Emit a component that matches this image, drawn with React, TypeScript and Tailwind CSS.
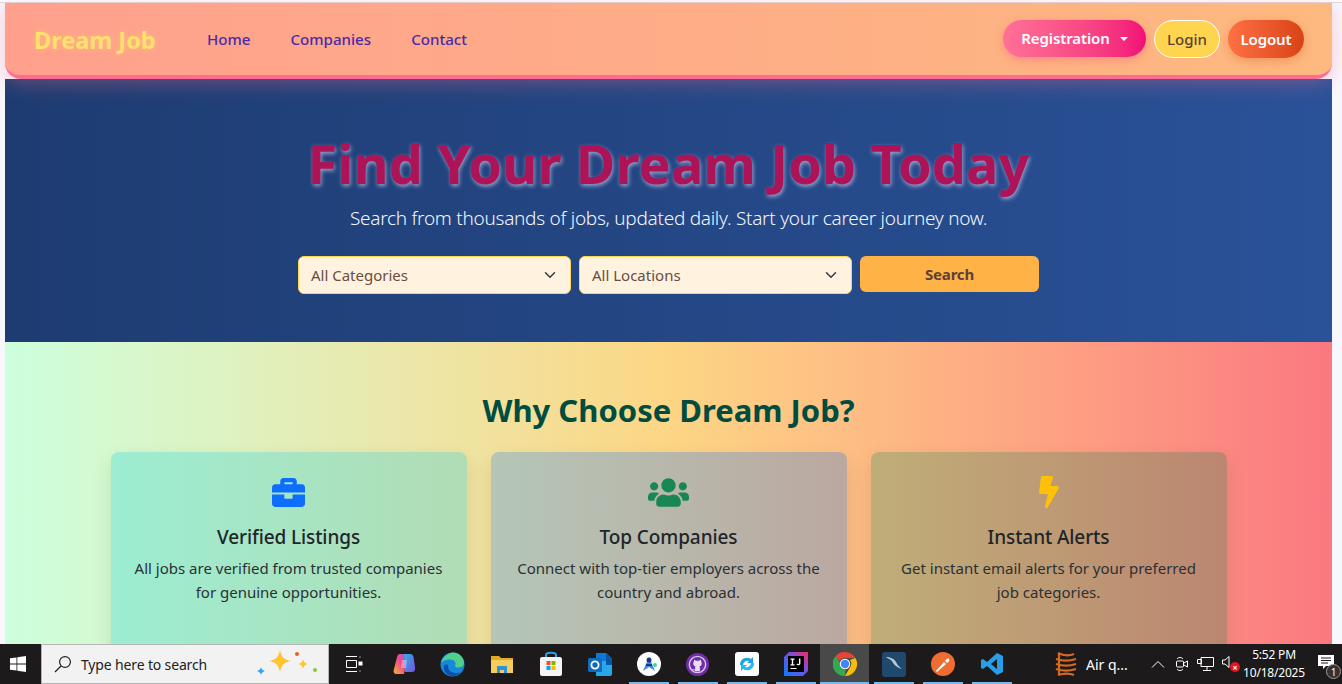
import React from 'react';
import { FaBriefcase, FaUsers, FaBolt } from 'react-icons/fa';

const ui = "font-['Noto_Sans',sans-serif]";

function ChevronDown() {
    return (
        <svg width="12" height="12" viewBox="0 0 16 16" fill="none" stroke="#343a40" strokeWidth="2" strokeLinecap="round" strokeLinejoin="round">
            <path d="M2 5l6 6 6-6" />
        </svg>
    );
}

function FakeSelect({ label }: { label: string }) {
    return (
        <div className="flex h-[38px] w-[273px] items-center justify-between rounded-md border border-[#ffd54f] bg-[#fff3e0] pl-3 pr-[14px] text-[15px] text-[#6a4c41]">
            <span>{label}</span>
            <ChevronDown />
        </div>
    );
}

function Navbar() {
    return (
        <nav className="relative z-10 ml-[5px] flex h-[76px] w-[1327px] shrink-0 items-center justify-between rounded-b-2xl border-b-4 border-[#ff6b93] bg-gradient-to-r from-[#ffa08e] to-[#fdb97f] pl-[29px] pr-[28px] shadow-[0_4px_20px_rgba(255,105,135,0.35)]">
            <div className="flex items-center">
                <span className="w-[173px] pt-[3px] text-[23.500px] font-bold text-[#ffe070] [text-shadow:0_0_6px_rgba(255,210,100,0.6)]">Dream Job</span>
                <div className="flex gap-10 text-[15.100px] font-medium text-[#4b2aa8]">
                    <a>Home</a>
                    <a>Companies</a>
                    <a>Contact</a>
                </div>
            </div>
            <div className="flex items-center gap-2">
                <button className="mb-[1px] flex h-[37px] w-[143px] items-center justify-center gap-2 rounded-full bg-gradient-to-r from-[#ff7096] to-[#f20b78] text-[15px] font-semibold tracking-[-0.1px] text-white shadow-[0_3px_10px_rgba(255,90,130,0.45)]">
                    Registration
                    <span className="ml-0.5 h-0 w-0 border-x-[4px] border-t-[4px] border-x-transparent border-t-white" />
                </button>
                <button className="h-[38px] w-[66px] rounded-full border border-white bg-[#ffd54f] text-[15px] font-medium text-[#5d4037]">Login</button>
                <button className="h-[38px] w-[76px] rounded-full bg-gradient-to-r from-[#ff7043] to-[#d84315] text-[15px] font-semibold tracking-[-0.1px] text-white shadow-[0_3px_10px_rgba(216,67,21,0.3)]">Logout</button>
            </div>
        </nav>
    );
}

function Hero() {
    return (
        <section className="ml-[5px] flex h-[263px] w-[1327px] shrink-0 flex-col items-center bg-gradient-to-r from-[#1e3c72] to-[#2a5298] pt-[47px]">
            <h1 className="text-[54px] font-bold leading-[74px] tracking-[0.1px] text-[#ad1457] [text-shadow:1px_2px_4px_rgba(235,225,255,0.6)]">Find Your Dream Job Today</h1>
            <p className="mt-[4px] text-[19px] font-light leading-[28px] tracking-[-0.27px] text-[#f3f6ff]">Search from thousands of jobs, updated daily. Start your career journey now.</p>
            <div className="mt-[24px] flex items-start gap-2">
                <FakeSelect label="All Categories" />
                <FakeSelect label="All Locations" />
                <button className="h-[36px] w-[179px] rounded-md bg-[#ffb347] text-[15px] font-bold tracking-[-0.2px] text-[#5d4037]">Search</button>
            </div>
        </section>
    );
}

function FeatureCard({ icon, title, lines, bg }: { icon: React.ReactNode; title: string; lines: string[]; bg: string }) {
    return (
        <div className={`flex h-[210px] w-[356px] flex-col items-center rounded-lg pt-[24px] shadow-[0_8px_20px_rgba(0,0,0,0.1)] ${bg}`}>
            <div className="flex h-[32px] items-center">{icon}</div>
            <h3 className="mt-[14px] text-[19px] font-medium leading-[30px] tracking-[-0.1px] text-[#212529]">{title}</h3>
            <p className="mt-[4px] text-center text-[15px] leading-[24px] text-[#2b3036]">
                {lines[0]}
                <br />
                {lines[1]}
            </p>
        </div>
    );
}

function Features() {
    return (
        <section className="ml-[5px] h-[302px] w-[1327px] shrink-0 bg-gradient-to-r from-[#ccffdd] via-[#fcd684] to-[#fa7880] pt-[44px]">
            <h2 className="text-center text-[31px] font-bold leading-[48px] text-[#004d40]">Why Choose Dream Job?</h2>
            <div className="mt-[18px] flex justify-center gap-6">
                <FeatureCard
                    bg="bg-gradient-to-r from-[#9cedd2] to-[#b1dcb4]"
                    icon={<FaBriefcase className="text-[33px] text-[#0d6efd]" />}
                    title="Verified Listings"
                    lines={['All jobs are verified from trusted companies', 'for genuine opportunities.']}
                />
                <FeatureCard
                    bg="bg-gradient-to-r from-[#b4c6b7] to-[#bba8a0]"
                    icon={<FaUsers className="text-[41px] text-[#198754]" />}
                    title="Top Companies"
                    lines={['Connect with top-tier employers across the', 'country and abroad.']}
                />
                <FeatureCard
                    bg="bg-gradient-to-r from-[#bfae78] to-[#bb8671]"
                    icon={<FaBolt className="text-[32px] text-[#ffc107]" />}
                    title="Instant Alerts"
                    lines={['Get instant email alerts for your preferred', 'job categories.']}
                />
            </div>
        </section>
    );
}

function AppSlot({ children, open, active }: { children: React.ReactNode; open?: boolean; active?: boolean }) {
    return (
        <div className={`relative flex h-10 w-[49px] shrink-0 items-center justify-center ${active ? 'bg-[#4a4949]' : ''}`}>
            {children}
            {open && <span className={`absolute bottom-0 h-[2px] bg-[#76b9ed] ${active ? 'left-0 w-full' : 'left-1/2 w-10 -translate-x-1/2'}`} />}
        </div>
    );
}

function Taskbar() {
    return (
        <footer className="flex h-10 w-[1342px] shrink-0 items-center bg-[#1c1a1b] text-white">
            <div className="flex w-[35px] shrink-0 justify-center">
                <svg width="16" height="16" viewBox="0 0 16 16" fill="#fff"><path d="M0 2.300l6.500-.9v6.200H0zM7.300 1.300L16 0v7.600H7.300zM0 8.400h6.500v6.200L0 13.700zM7.300 8.400H16V16l-8.700-1.200z" /></svg>
            </div>
            <div className="ml-[6px] flex h-10 w-[288px] shrink-0 items-center border border-[#b5b5b5] bg-[#f2f2f2] pl-[12px]">
                <svg width="18" height="18" viewBox="0 0 18 18" fill="none" stroke="#222" strokeWidth="1.200"><circle cx="11" cy="7" r="5.400" /><path d="M7 11l-6 6" /></svg>
                <span className="ml-[9px] w-[128px] shrink-0 text-[14px] tracking-[-0.15px] text-[#222]">Type here to search</span>
                <svg className="ml-[46px] shrink-0" width="64" height="30" viewBox="0 0 64 30">
                    <path d="M25 1c1.500 7 4 10 11 11-7 1-9.500 4-11 11-1.500-7-4-10-11-11 7-1 9.500-4 11-11z" fill="#ffc42e" />
                    <path d="M48 10c.6 3 2 4.500 5 5-3 .5-4.400 2-5 5-.6-3-2-4.500-5-5 3-.5 4.400-2 5-5z" fill="#ffc42e" />
                    <path d="M6 18c.4 2 1.300 3 4 4-2.700 1-3.600 2-4 4-.4-2-1.300-3-4-4 2.700-1 3.600-2 4-4z" fill="#2fa6ef" />
                    <circle cx="42" cy="5" r="2" fill="#ee5a24" />
                    <circle cx="60" cy="21" r="2" fill="#8cc63f" />
                </svg>
            </div>
            <div className="flex w-[50px] shrink-0 justify-center">
                <svg width="18" height="16" viewBox="0 0 18 16" fill="none" stroke="#fff" strokeWidth="1"><path d="M1 .5h11M1 15.500h11M1.500 4.500h10v7h-10zM15 .5v1M15 14.500v1" /><rect x="14" y="6" width="3" height="3" fill="#fff" /></svg>
            </div>
            <AppSlot>
                <svg width="24" height="24" viewBox="0 0 24 24">
                    <defs>
                        <linearGradient id="cp1" x1="0" y1="0" x2="1" y2="1"><stop offset="0" stopColor="#2bb3e8" /><stop offset="1" stopColor="#7c4fe0" /></linearGradient>
                        <linearGradient id="cp2" x1="0" y1="1" x2="1" y2="0"><stop offset="0" stopColor="#f7b52a" /><stop offset="0.5" stopColor="#ee4f8a" /><stop offset="1" stopColor="#c04fd0" /></linearGradient>
                    </defs>
                    <path d="M8 2h8l-4 20H5c-3 0-4-2-3-5l3-12c.5-2 1.500-3 3-3z" fill="url(#cp2)" />
                    <path d="M12 2h6c2 0 3 1 3.500 3L23 15c.5 3-.5 5-3 5h-7z" fill="url(#cp1)" />
                    <path d="M10 8h5l-1 8H9z" fill="#fff" opacity="0.35" />
                </svg>
            </AppSlot>
            <AppSlot>
                <svg width="25" height="25" viewBox="0 0 25 25">
                    <circle cx="12.500" cy="12.500" r="12" fill="#1689d8" />
                    <path d="M1 11C3 4 9 .5 13 .5c6 0 11 5 11 10.500 0 3-3 4.500-6 4.500-2 0-3-1-3-2 2-3-1-6-5-6-4 0-7 1-9 3.500z" fill="#4fd08c" />
                    <path d="M8 14c0 5 4 7 8 7 2 0 4-.5 5-1.500-2 3-5 4.500-8.500 4.500C8 24 3 20 4 14c1-2 4-2 4 0z" fill="#0c4ea8" />
                </svg>
            </AppSlot>
            <AppSlot>
                <svg width="22" height="19" viewBox="0 0 22 19"><path d="M0 1h8l2 2h12v15H0z" fill="#e3a826" /><path d="M0 5h22v13H0z" fill="#f6cd5a" /><path d="M6 11h10v7h-3v-3H9v3H6z" fill="#2f93d8" /></svg>
            </AppSlot>
            <AppSlot>
                <svg width="24" height="26" viewBox="0 0 24 26">
                    <path d="M7 7V4c0-3 10-3 10 0v3" fill="none" stroke="#2aa3e8" strokeWidth="2" />
                    <rect x="1" y="6" width="22" height="19" rx="2" fill="#f5f5f5" />
                    <rect x="7.500" y="10" width="4" height="4" fill="#f25022" /><rect x="12.500" y="10" width="4" height="4" fill="#7fba00" />
                    <rect x="7.500" y="15" width="4" height="4" fill="#00a4ef" /><rect x="12.500" y="15" width="4" height="4" fill="#ffb900" />
                </svg>
            </AppSlot>
            <AppSlot>
                <svg width="24" height="24" viewBox="0 0 24 24">
                    <path d="M8 1h10l6 6v15a2 2 0 0 1-2 2H8z" fill="#28a8ea" /><path d="M8 1h10v8H8z" fill="#0f78d4" /><path d="M18 1l6 6v6h-6z" fill="#0358a7" />
                    <rect x="0" y="6" width="14" height="14" rx="1.500" fill="#0f6cbd" />
                    <circle cx="7" cy="13" r="3.600" fill="none" stroke="#fff" strokeWidth="1.800" />
                </svg>
            </AppSlot>
            <AppSlot open>
                <svg width="24" height="24" viewBox="0 0 24 24">
                    <circle cx="12" cy="12" r="12" fill="#fff" />
                    <path d="M6 19L12 5l6 14-6-4z" fill="#4285f4" /><circle cx="12" cy="8" r="2.500" fill="#1a3a7a" /><rect x="9" y="12" width="6" height="2" fill="#1a3a7a" /><circle cx="18" cy="13" r="2" fill="#3ddc84" />
                </svg>
            </AppSlot>
            <AppSlot open>
                <svg width="23" height="23" viewBox="0 0 24 24">
                    <circle cx="12" cy="12" r="12" fill="#6f2da8" />
                    <circle cx="12" cy="12" r="8.500" fill="none" stroke="#d9c7ea" strokeWidth="1.500" />
                    <path d="M8 9l.5-2 2 1h3l2-1 .5 2c1 2 .5 4-2 5 .5.5.5 1 .5 2v3h-5v-1c-2 .5-3-.5-3.500-1.500 1 .3 1.500 1 3.500.5v-1c0-1 0-1.500.5-2-2.500-1-3-3-2-5z" fill="#e8dcf2" />
                </svg>
            </AppSlot>
            <AppSlot open>
                <svg width="24" height="24" viewBox="0 0 24 24">
                    <rect width="24" height="24" rx="3" fill="#fff" />
                    <path d="M5 13a7 7 0 0 1 11-6l2-2v6h-6l2-2a4.500 4.500 0 0 0-6 4z" fill="#1fa2e8" /><path d="M19 11a7 7 0 0 1-11 6l-2 2v-6h6l-2 2a4.500 4.500 0 0 0 6-4z" fill="#2bb6f0" />
                </svg>
            </AppSlot>
            <AppSlot open>
                <svg width="24" height="24" viewBox="0 0 24 24">
                    <defs><linearGradient id="ij" x1="0" y1="1" x2="1" y2="0"><stop offset="0" stopColor="#087cfa" /><stop offset="0.6" stopColor="#7c4fe0" /><stop offset="1" stopColor="#fe2857" /></linearGradient></defs>
                    <path d="M5 0h19v19l-5 5H0V5z" fill="url(#ij)" />
                    <rect x="4" y="4" width="16" height="16" fill="#000" />
                    <path d="M6.500 6.500h4v1.200H9.200v4.600h1.300v1.200h-4v-1.200h1.300V7.700H6.500zM15 6.500h1.400v5.200c0 1.300-2.800 2.500-4 .6l.9-.7c.6.8 1.700.6 1.700-.2zM6.500 16h6v1h-6z" fill="#fff" />
                </svg>
            </AppSlot>
            <AppSlot open active>
                <svg width="24" height="24" viewBox="0 0 24 24">
                    <path d="M12 0a12 12 0 0 1 10.400 6H12a6 6 0 0 0-5.400 3.500L2.800 3.900A12 12 0 0 1 12 0z" fill="#ea4335" />
                    <path d="M22.400 6A12 12 0 0 1 12 24l5.200-9A6 6 0 0 0 17 8z" fill="#fbbc05" />
                    <path d="M12 24A12 12 0 0 1 2.800 3.900L7 11a6 6 0 0 0 5.500 7z" fill="#34a853" />
                    <circle cx="12" cy="12" r="5.200" fill="#fff" /><circle cx="12" cy="12" r="4.200" fill="#4285f4" />
                </svg>
            </AppSlot>
            <AppSlot open>
                <svg width="24" height="25" viewBox="0 0 24 25">
                    <rect width="24" height="25" rx="3" fill="#1f4a6e" />
                    <path d="M4 5c5 0 9 2 11 7 1 2 3 3 5 5-3-1-5-2-6-3-2-1-3-4-5-6-2-1-4-2-5-3z" fill="#b9c9d6" />
                </svg>
            </AppSlot>
            <AppSlot open>
                <svg width="24" height="24" viewBox="0 0 24 24">
                    <circle cx="12" cy="12" r="12" fill="#ef6c33" />
                    <path d="M5 19l8-9 2 2-9 8zM14 9c1-2 3-3 4-2s0 3-2 4z" fill="#fff" />
                </svg>
            </AppSlot>
            <AppSlot open>
                <svg width="24" height="24" viewBox="0 0 24 24">
                    <path d="M17 1l6 3v16l-6 3L7 14l-4 3-2-1V8l2-1 4 3zM17 7l-6 5 6 5z" fill="#2a9de8" fillRule="evenodd" />
                </svg>
            </AppSlot>
            <div className="ml-[39px] flex shrink-0 items-center">
                <svg width="22" height="26" viewBox="0 0 22 26" fill="none" stroke="#d8691f" strokeWidth="2.200"><path d="M3 2c6 3 11 3 16 1M1 8c6 2 14 2 20 0M1 13c6 2 14 2 20 0M1 18c6 2 14 2 20 0M3 24c6-2 11-2 16 0" /><path d="M4 2v22" /></svg>
                <span className="ml-[9px] w-[65px] text-[14px] text-white">Air q...</span>
            </div>
            <svg className="shrink-0" width="14" height="8" viewBox="0 0 14 8" fill="none" stroke="#fff" strokeWidth="1"><path d="M1 7.500l6-6 6 6" /></svg>
            <svg className="ml-[11px] shrink-0" width="12" height="16" viewBox="0 0 12 16" fill="none" stroke="#fff" strokeWidth="1"><path d="M1 3c1-2 5-2 6 0M1 13c1 2 5 2 6 0" /><rect x="0.500" y="5" width="7" height="6" rx="1" /><path d="M8 9l3.500 2V5L8 7" /></svg>
            <svg className="ml-[9px] shrink-0" width="17" height="14" viewBox="0 0 17 14" fill="none" stroke="#fff" strokeWidth="1"><path d="M4 .5h12.500v9H4zM10 9.500v4M6 13.500h8M.5 2.500h4v4h-4z" /></svg>
            <div className="relative ml-[8px] h-[16px] w-[17px] shrink-0">
                <svg width="10" height="12" viewBox="0 0 10 12" fill="none" stroke="#fff" strokeWidth="1"><path d="M.5 4v4h2.500l4 3.500v-11L3 4z" /></svg>
                <span className="absolute bottom-0 right-[-1px] flex h-[10px] w-[10px] items-center justify-center rounded-full bg-[#e81123] text-[9px] font-bold leading-none">×</span>
            </div>
            <div className="ml-[2px] w-[66px] shrink-0 text-center text-[12px] leading-[18px] tracking-[-0.2px] text-white">
                <div>5:52 PM</div>
                <div>10/18/2025</div>
            </div>
            <div className="relative ml-[11px] h-[18px] w-[18px] shrink-0">
                <svg width="16" height="15" viewBox="0 0 16 15"><path d="M0 0h16v11H8l-3 3v-3H0z" fill="#fff" /><path d="M3 3h10M3 5.500h10M3 8h7" stroke="#1c1a1b" /></svg>
                <span className="absolute bottom-[-6px] right-[-5px] flex h-[15px] w-[15px] items-center justify-center rounded-full border border-[#999] bg-[#333] text-[10px] leading-none">1</span>
            </div>
        </footer>
    );
}

export default function App() {
    return (
        <div className={`flex h-[684px] w-[1342px] flex-col overflow-hidden bg-[#f8f7fe] ${ui}`}>
            <div className="h-[3px] shrink-0 border-b border-[#dcdcdc] bg-white" />
            <Navbar />
            <Hero />
            <Features />
            <Taskbar />
        </div>
    );
}
